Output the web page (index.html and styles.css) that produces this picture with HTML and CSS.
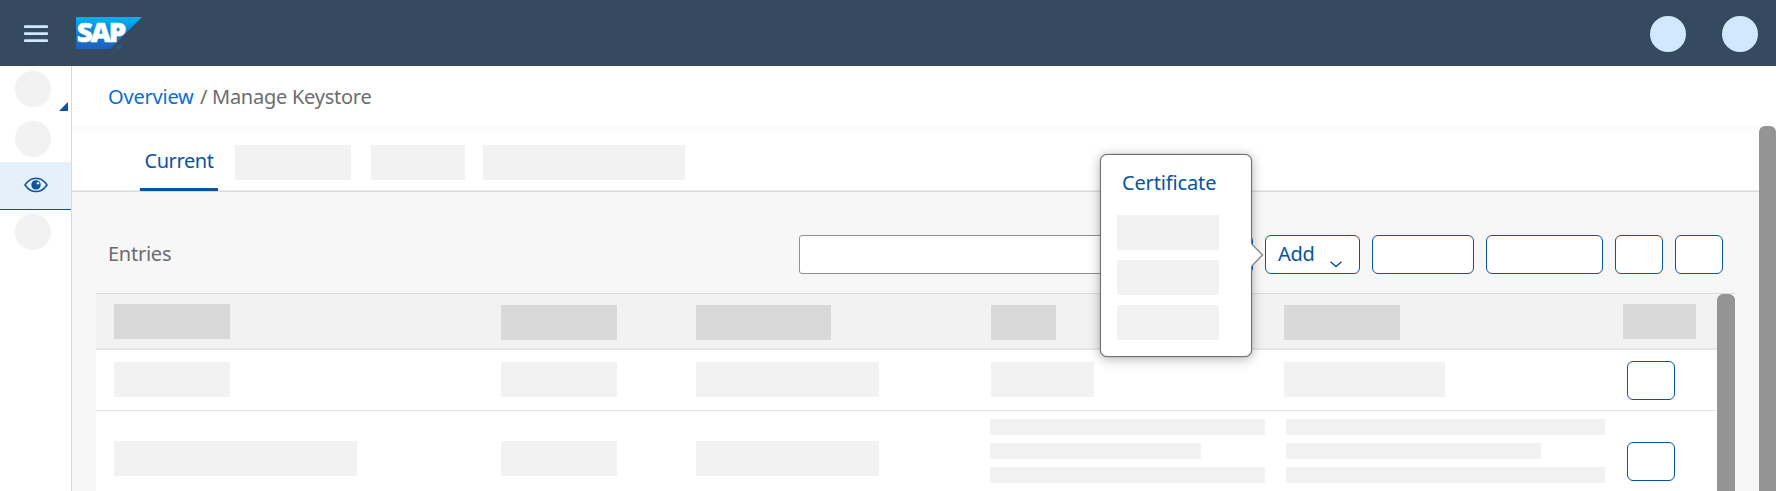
FILE: index.html
```html
<!DOCTYPE html>
<html lang="en">
<head>
<meta charset="utf-8">
<title>Manage Keystore</title>
<link rel="stylesheet" href="styles.css">
</head>
<body>
<header class="shell">
  <svg class="menu" width="24" height="18" viewBox="0 0 24 18" fill="#d1e8ff"><rect y="0.2" width="24" height="2.8" rx=".8"/><rect y="7.2" width="24" height="2.8" rx=".8"/><rect y="14.2" width="24" height="2.8" rx=".8"/></svg>
  <svg class="logo" width="66" height="32" viewBox="0 0 66 32">
    <defs><linearGradient id="lg" x1="0" y1="0" x2="0" y2="1"><stop offset="0" stop-color="#05b3ee"/><stop offset=".5" stop-color="#1381d3"/><stop offset="1" stop-color="#1e5fbb"/></linearGradient></defs>
    <path d="M0 0H66L34 32H0Z" fill="url(#lg)"/>
    <circle cx="43" cy="30" r="2.2" fill="#245b9c"/>
    <text class="logo-text" x="0.8" y="25.4" textLength="47.500" lengthAdjust="spacingAndGlyphs">SAP</text>
  </svg>
  <div class="avatars"><span class="avatar"></span><span class="avatar"></span></div>
</header>
<div class="body">
  <nav class="side">
    <div class="side-item first"><span class="dot"></span><i class="expander"></i></div>
    <div class="side-item"><span class="dot"></span></div>
    <div class="side-item active">
      <svg width="24" height="16" viewBox="0 0 24 16"><path d="M1 8C4.2 3.2 7.8 1.2 12 1.2S19.8 3.2 23 8C19.8 12.6 16.200 14.600 12 14.600S4.200 12.600 1 8Z" fill="none" stroke="#0854a0" stroke-width="1.500"/><circle cx="12" cy="7.900" r="4.700" fill="#0854a0"/><circle cx="14" cy="6.200" r="1.300" fill="#e5f0fa"/></svg>
    </div>
    <div class="side-item last"><span class="dot"></span></div>
  </nav>
  <main class="main">
    <div class="crumbs"><a class="link">Overview</a><span class="slash">/</span><span class="page">Manage Keystore</span></div>
    <div class="scroller">
      <div class="content">
        <div class="tabs">
          <div class="tab">Current</div>
          <span class="box w116"></span><span class="box w94"></span><span class="box w202"></span>
        </div>
        <div class="toolbar">
          <span class="title">Entries</span>
          <div class="search"></div>
          <div class="anchor">
            <div class="btn covered"></div>
            <div class="popover">
              <span class="option">Certificate</span>
              <span class="box"></span><span class="box"></span><span class="box"></span>
              <svg class="arrow" width="14" height="24" viewBox="0 0 14 24"><path d="M0 0.500H1.500L12.700 12L1.500 23.500H0Z" fill="#fff"/><path d="M1.500 0.700L12.500 12L1.500 23.300" fill="none" stroke="#858585" stroke-width="1.300"/></svg>
            </div>
          </div>
          <div class="btn add"><span>Add</span><svg width="12" height="7" viewBox="0 0 12 7"><path d="M0.500 0.700L6 5.600L11.500 0.700" fill="none" stroke="#0854a0" stroke-width="1.400"/></svg></div>
          <div class="btn w102"></div><div class="btn w117"></div><div class="btn"></div><div class="btn"></div>
        </div>
        <div class="table-wrap">
          <div class="table">
            <div class="row head">
              <span class="box w116 up"></span><span class="box w116"></span><span class="box w135"></span><span class="box w65"></span><span class="box w116"></span><span class="box w73 up"></span>
            </div>
            <div class="row">
              <span class="box w116"></span><span class="box w116"></span><span class="box w183"></span><span class="box w103"></span><span class="box w161"></span><div class="btn"></div>
            </div>
            <div class="row tall">
              <span class="box w243"></span><span class="box w116"></span><span class="box w183"></span>
              <div class="lines narrow"><i></i><i class="short"></i><i></i></div>
              <div class="lines wide"><i></i><i class="short"></i><i></i></div>
              <div class="btn"></div>
            </div>
          </div>
          <div class="thumb"></div>
        </div>
      </div>
      <div class="thumb outer"></div>
    </div>
  </main>
</div>
</body>
</html>
```
FILE: styles.css
```css
* { box-sizing: border-box; }
body { margin: 0; height: 491px; overflow: hidden; background: #fff; font-family: "Noto Sans", "Open Sans", sans-serif; font-size: 20px; line-height: 24px; color: #6a6d70; }
svg { display: block; }

.shell { height: 66px; background: #354a5f; display: flex; align-items: center; padding: 0 18px 0 24px; }
.menu { margin-top: 2px; }
.logo { margin-left: 28px; overflow: visible; }
.logo-text { font: 800 27px "Open Sans", sans-serif; letter-spacing: -2px; fill: #fff; stroke: #fff; stroke-width: .5px; }
.avatars { margin-left: auto; margin-top: 2px; display: flex; gap: 36px; }
.avatar { width: 36px; height: 36px; border-radius: 50%; background: #d1e8ff; }

.body { display: flex; height: 425px; }
.side { width: 72px; flex: none; border-right: 1px solid #d9d9d9; }
.side-item { height: 46px; padding: 5px 0 0 15px; }
.side-item.first { height: 50px; position: relative; }
.dot { display: block; width: 36px; height: 36px; border-radius: 50%; background: #f2f2f2; }
.expander { position: absolute; left: 59px; top: 36px; width: 9px; height: 9px; background: #0854a0; clip-path: polygon(100% 0, 100% 100%, 0 100%); }
.side-item.active { height: 48px; background: #e5f0fa; border-bottom: 1px solid #0854a0; padding: 15px 0 0 24px; }
.side-item.last { padding-top: 4px; }

.main { flex: 1; min-width: 0; }
.crumbs { height: 60px; display: flex; padding: 19px 0 0 36px; white-space: nowrap; }
.link { color: #0a6ed1; width: 92px; letter-spacing: -.2px; }
.slash { width: 12px; }
.page { letter-spacing: -.25px; }
.scroller { display: flex; height: 365px; }
.content { flex: 1; background: #f7f7f7; }
.thumb { width: 18px; flex: none; background: #949494; border-radius: 6px 6px 0 0; }
.thumb.outer { width: 17px; }

.box { display: block; height: 35px; background: #f2f2f2; }
.w65 { width: 65px; }
.w73 { width: 73px; }
.w94 { width: 94px; }
.w103 { width: 103px; }
.w116 { width: 116px; }
.w135 { width: 135px; }
.w161 { width: 161px; }
.w183 { width: 183px; }
.w202 { width: 202px; }
.w243 { width: 243px; }

.tabs { height: 66px; background: linear-gradient(#fafafa, #fff 5px); border-bottom: 1px solid #d9d9d9; box-shadow: inset 0 -1px #ececec; display: flex; padding: 19px 0 0 68px; }
.tab { width: 78px; height: 46px; margin-right: 17px; border-bottom: 3px solid #0854a0; border-radius: 2px 2px 0 0; color: #0854a0; text-align: center; padding-top: 4px; letter-spacing: -.4px; }
.tabs .w94 { margin: 0 18px 0 20px; }

.toolbar { height: 101px; display: flex; gap: 12px; padding: 43px 36px 0 36px; }
.title { padding-top: 7px; letter-spacing: -.25px; }
.search { width: 379px; height: 39px; margin-left: auto; border: 1px solid #89919a; border-radius: 3px; background: #fff; }
.btn { width: 48px; height: 39px; border: 1px solid #0854a0; border-radius: 6px; background: #fff; }
.btn.w102 { width: 102px; }
.btn.w117 { width: 117px; }
.btn.covered { width: 63px; }
.btn.add { width: 95px; padding: 6px 0 0 12px; display: flex; color: #0854a0; letter-spacing: -.3px; }
.add span { width: 37px; }
.add svg { margin: 19px 0 0 15px; }

.anchor { position: relative; }
.popover { position: absolute; z-index: 2; right: 1px; top: -81px; width: 152px; height: 203px; background: #fff; border: 1px solid #6f6f6f; border-radius: 7px; box-shadow: 0 0 1px #666, 0 2px 12px rgba(0,0,0,.3); padding: 16px 0 0 16px; display: flex; flex-direction: column; gap: 10px; }
.popover .box { width: 102px; }
.option { height: 34px; padding-left: 5px; color: #0854a0; letter-spacing: -.15px; }
.arrow { position: absolute; left: 149px; top: 88px; }

.table-wrap { margin: 0 24px; height: 198px; border-top: 1px solid #d9d9d9; background: #fff; display: flex; }
.table { flex: 1; }
.row { display: grid; grid-template-columns: 387px 195px 295px 293px 339px 1fr; height: 61px; padding: 12px 0 0 18px; border-bottom: 1px solid #e5e5e5; align-items: start; }
.row.head { height: 56px; padding-top: 11px; background: #f2f2f2; border-bottom: 2px solid #e5e5e5; }
.head .box { background: #d9d9d9; }
.head .up { margin-top: -1px; }
.row .btn { margin: -1px 0 0 4px; }
.row.tall { height: 80px; padding-top: 30px; border: 0; }
.tall .btn { margin-top: 1px; }
.lines { margin-top: -22px; display: grid; gap: 8px; }
.lines i { height: 16px; background: #f2f2f2; }
.narrow { width: 275px; margin-left: -1px; }
.wide { width: 319px; margin-left: 2px; }
.lines .short { margin-right: 64px; }
```
